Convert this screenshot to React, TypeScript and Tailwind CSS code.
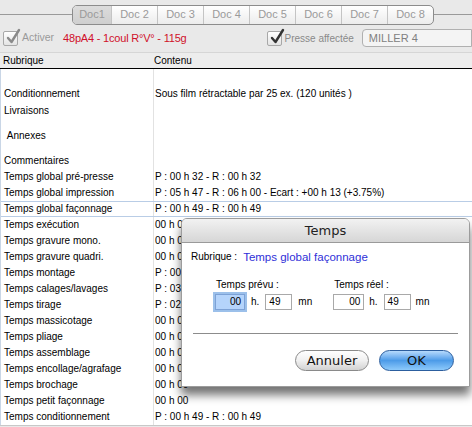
import React from 'react';

const tabs = ['Doc1', 'Doc 2', 'Doc 3', 'Doc 4', 'Doc 5', 'Doc 6', 'Doc 7', 'Doc 8'];

type Row = { label: string; value: string; h?: string; selected?: boolean; top?: boolean };

const rows: Row[] = [
  { label: '', value: '', h: 'h-[17px]' },
  { label: 'Conditionnement', value: 'Sous film rétractable par 25 ex. (120 unités )' },
  { label: 'Livraisons', value: '', h: 'h-[25px]', top: true },
  { label: '\u00a0Annexes', value: '', h: 'h-[26px]', top: true },
  { label: 'Commentaires', value: '' },
  { label: 'Temps global pré-presse', value: 'P : 00 h 32 - R : 00 h 32' },
  { label: 'Temps global impression', value: 'P : 05 h 47 - R : 06 h 00 - Ecart : +00 h 13 (+3.75%)' },
  { label: 'Temps global façonnage', value: 'P : 00 h 49 - R : 00 h 49', selected: true },
  { label: 'Temps exécution', value: '00 h 00' },
  { label: 'Temps gravure mono.', value: '00 h 00' },
  { label: 'Temps gravure quadri.', value: '00 h 00' },
  { label: 'Temps montage', value: 'P : 00 h 00 - R : 00 h 00' },
  { label: 'Temps calages/lavages', value: 'P : 03 h 10 - R : 03 h 20' },
  { label: 'Temps tirage', value: 'P : 02 h 37 - R : 02 h 40' },
  { label: 'Temps massicotage', value: '00 h 00' },
  { label: 'Temps pliage', value: '00 h 00' },
  { label: 'Temps assemblage', value: '00 h 00' },
  { label: 'Temps encollage/agrafage', value: '00 h 00' },
  { label: 'Temps brochage', value: '00 h 00' },
  { label: 'Temps petit façonnage', value: '00 h 00' },
  { label: 'Temps conditionnement', value: 'P : 00 h 49 - R : 00 h 49' },
];

function Check({ dark }: { dark?: boolean }) {
  return (
    <div className="w-[15px] h-[15px] rounded-[2px] border border-[#a8a8a8] bg-gradient-to-b from-white to-[#e4e4e4] relative">
      <svg width="17" height="17" viewBox="0 0 17 17" className="absolute -top-[4px] left-[1px]">
        <path d="M3 10 L6.5 14 L14 2" fill="none" stroke={dark ? '#333' : '#8a8a8a'} strokeWidth="2.4" strokeLinecap="round" strokeLinejoin="round" />
      </svg>
    </div>
  );
}

export default function App() {
  return (
    <div className="w-[472px] h-[427px] bg-[#e9e9e9] relative overflow-hidden text-[10px] text-black font-['Liberation_Sans',sans-serif]">
      {/* Tabs */}
      <div className="h-[28px] flex items-center pt-[1px]">
        <div className="w-[72px] h-px bg-[#9a9a9a]" />
        <div className="flex h-[20px] border border-[#8c8c8c] rounded-[5px] bg-gradient-to-b from-white to-[#ececec] overflow-hidden">
          {tabs.map((t, i) => (
            <div
              key={t}
              className={`flex items-center justify-center text-[11px] text-[#9a9a9a] ${i === 0 ? 'w-[38px] bg-gradient-to-b from-[#dcdcdc] to-[#cfcfcf]' : 'w-[46px] border-l border-[#c4c4c4]'}`}
            >
              {t}
            </div>
          ))}
        </div>
        <div className="flex-1 h-px bg-[#9a9a9a]" />
      </div>

      {/* Options row */}
      <div className="h-[20px] flex items-center">
        <div className="ml-[3px]"><Check /></div>
        <span className="ml-[4px] text-[10.5px] text-[#9a9a9a]">Activer</span>
        <span className="ml-[9px] text-[11px] text-[#d0102a] tracking-[-0.2px]">48pA4 - 1coul R°V° - 115g</span>
        <div className="ml-[80px]"><Check dark /></div>
        <span className="ml-[3px] text-[10px] text-[#8a8a8a]">Presse affectée</span>
        <div className="ml-[8px] flex-1 h-[18px] border border-[#b0b0b0] rounded-l-[4px] bg-[#f4f4f4] flex items-center pl-[6px] text-[11px] text-[#808080]">
          MILLER 4
        </div>
      </div>

      {/* Header */}
      <div className="mt-[4px] h-[17px] flex items-center border-t border-[#d6d6d6] border-b border-b-black bg-[#ededed]">
        <div className="w-[153px] pl-[3px]">Rubrique</div>
        <div className="pl-[1px]">Contenu</div>
      </div>

      {/* Table */}
      <div className="bg-white border-l border-[#c9d6e6] h-[356px] overflow-hidden">
        {rows.map((r, i) => (
          <div
            key={i}
            className={`flex ${r.h ?? 'h-[16px]'} ${r.top ? 'items-start' : 'items-center'} ${r.selected ? 'border-y border-[#b9cde6]' : ''}`}
          >
            <div className={`w-[153px] h-full pl-[3px] border-r border-[#e2e2e2] whitespace-nowrap leading-[14px] ${r.top ? 'pt-[2px]' : 'flex items-center'}`}>{r.label}</div>
            <div className="pl-[1px] whitespace-nowrap leading-[14px]">{r.value}</div>
          </div>
        ))}
      </div>
      <div className="h-px bg-[#c8c8c8]" />

      {/* Dialog */}
      <div className="absolute left-[181px] top-[218px] w-[289px] h-[169px] bg-white border border-[#9c9c9c] rounded-t-[6px] shadow-[0_8px_10px_rgba(0,0,0,0.55)] overflow-hidden font-['DejaVu_Sans',sans-serif]">
        <div className="h-[24px] bg-gradient-to-b from-[#f2f2f2] to-[#d6d6d6] border-b border-[#9a9a9a] flex items-center justify-center text-[13px] text-[#222]">
          Temps
        </div>
        <div className="pl-[9px] pt-[7px] h-[21px] flex items-center font-['Liberation_Sans',sans-serif] leading-[14px]">
          <span className="text-[10px]">Rubrique :</span>
          <span className="ml-[6px] text-[11.5px] text-[#2f2fd8]">Temps global façonnage</span>
        </div>
        <div className="flex pl-[33px] pt-[15px] font-['Liberation_Sans',sans-serif] text-[10px] leading-[12px]">
          <div className="flex flex-col">
            <span className="pl-[1px] h-[12px]">Temps prévu :</span>
            <div className="flex items-center mt-[3px] h-[16px]">
              <div className="w-[30px] h-[16px] border border-[#7da2d6] ring-2 ring-[#9cc0ea] bg-[#b5d4fb] flex items-center justify-end pr-[3px]">00</div>
              <span className="ml-[6px]">h.</span>
              <div className="ml-[6px] w-[27px] h-[16px] border border-[#a9a9a9] flex items-center pl-[3px]">49</div>
              <span className="ml-[6px]">mn</span>
            </div>
          </div>
          <div className="flex flex-col ml-[21px]">
            <span className="pl-[1px] h-[12px]">Temps réel :</span>
            <div className="flex items-center mt-[3px] h-[16px]">
              <div className="w-[31px] h-[16px] border border-[#a9a9a9] flex items-center justify-end pr-[3px]">00</div>
              <span className="ml-[5px]">h.</span>
              <div className="ml-[6px] w-[27px] h-[16px] border border-[#a9a9a9] flex items-center pl-[3px]">49</div>
              <span className="ml-[5px]">mn</span>
            </div>
          </div>
        </div>
        <div className="mx-[11px] mt-[23px] h-px bg-[#8c8c8c]" />
        <div className="flex justify-end gap-[10px] pr-[15px] mt-[16px] text-[13px]">
          <div className="w-[74px] h-[21px] rounded-full border border-[#8a8a8a] bg-gradient-to-b from-white via-[#f0f0f0] to-[#d2d2d2] flex items-center justify-center text-[#111]">
            Annuler
          </div>
          <div className="w-[75px] h-[21px] rounded-full border border-[#2c5e9e] bg-gradient-to-b from-[#b6dafc] via-[#4c9be8] to-[#8dcafb] flex items-center justify-center text-[#111]">
            OK
          </div>
        </div>
      </div>
    </div>
  );
}
